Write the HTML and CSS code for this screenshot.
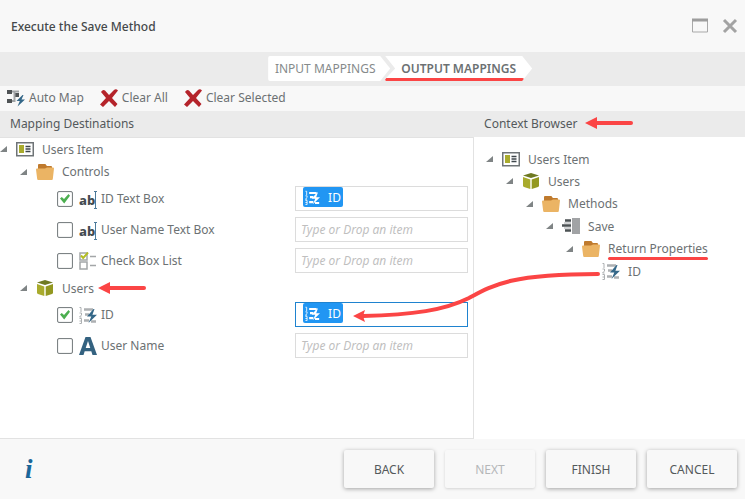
FILE: index.html
```
<!DOCTYPE html>
<html lang="en">
<head>
    <meta charset="UTF-8">
    <meta name="viewport" content="width=device-width, initial-scale=1.0">
    <title>Execute the Save Method</title>
    <link rel="stylesheet" href="styles.css">
</head>
<body>
    <!-- Shared icons -->
    <svg class="sprite" aria-hidden="true">
        <symbol id="i-toggle" viewBox="0 0 8 8"><path d="M7 1v6H0z" fill="#7f8485"/></symbol>
        <symbol id="i-item" viewBox="0 0 18 18">
            <rect x="0.75" y="2.75" width="16.5" height="13" fill="#fff" stroke="#6f7477" stroke-width="1.5"/>
            <rect x="3" y="5" width="5" height="8" fill="#a9ab2d"/>
            <path d="M9.500 6.500h5M9.500 9h5M9.500 11.500h5" stroke="#3e464b" stroke-width="1.3"/>
        </symbol>
        <symbol id="i-folder" viewBox="0 0 18 18">
            <path d="M2 7V2q0-1 1-1h6q1 0 1 1l1 1h4q1 0 1 1v3z" fill="#bf7a2d"/>
            <path d="M1 5.500h8l2-1h6q1 0 1 1l-1.200 10.500q0 1-1 1H2.200q-1 0-1-1L0 6.500q0-1 1-1z" fill="#ebb464"/>
        </symbol>
        <symbol id="i-cube" viewBox="0 0 18 18">
            <path d="M1 3.500L9 1l8 2.500L9 6z" fill="#6f7a22"/>
            <path d="M1 5l7.300 2.500V17L2 15q-1-.5-1-1.500z" fill="#a9ab2d"/>
            <path d="M17 5L9.700 7.500V17l6.300-2q1-.5 1-1.500z" fill="#939820"/>
        </symbol>
        <symbol id="i-list" viewBox="0 0 18 18">
            <path d="M1 1h7v7H1zM1 10h7v7H1z" fill="#fff" stroke="#a3a6a8" stroke-width="1.500"/>
            <path d="M2 3.500l2.200 2.500L9 .5" fill="none" stroke="#b4bd22" stroke-width="2"/>
            <path d="M11 4.500h6M11 13.500h6" stroke="#a3a6a8" stroke-width="1.500"/>
        </symbol>
        <symbol id="i-number" viewBox="0 0 18 18">
            <path d="M.5 1.500H2V6M.5 7h2v2l-2 2h2M.5 12.500h2v5h-2M.5 15h2" fill="none" stroke="var(--line, #adb0b2)"/>
            <path d="M5 3.500h9M6 8.500h4M5 14.500h5M12 15.500h5" stroke="var(--line, #adb0b2)" stroke-width="2.500"/>
            <path d="M14.500 3L8 10.500h4.300L9.500 17 18 8.800h-4.600l2.100-5.800z" fill="var(--bolt, #346788)"/>
        </symbol>
        <symbol id="i-letter" viewBox="0 0 18 18">
            <path d="M6.500 0h5L18 18h-4.500l-1.200-3.800H5.700L4.500 18H0zM9 4l-2.300 7h4.600z" fill="#346280"/>
        </symbol>
        <symbol id="i-method" viewBox="0 0 18 18">
            <path d="M3 3.500h6M0 8.500h9M3 13.500h6" stroke="#4c5254" stroke-width="2.500"/>
            <path d="M2 6h7M2 11h7" stroke="#a5a8aa"/>
            <path d="M10 1h8v16h-8z" fill="#a1a3a5"/>
        </symbol>
        <symbol id="i-cross" viewBox="0 0 18 18">
            <path d="M1 3q2-3 4-1.500L9 6l5-5q2-1.500 4 .5L12 9l5.500 6-2.500 3-6-6-6 6-3-2.500L6 9z" fill="#b5242b"/>
        </symbol>
        <symbol id="i-automap" viewBox="0 0 18 18">
            <path d="M0 1h5v4H0zM7 4h5v4H7zM0 10h5v4H0z" fill="#4f5355"/>
            <path d="M5 2.500h2.500V12H5M8 2.500h4" fill="none" stroke="#a1a4a6" stroke-width="2"/>
            <path d="M15.500 6L9.500 12h3.300l-2.300 5.500L18 10.500h-3.500l2-4.500z" fill="#346788"/>
        </symbol>
        <symbol id="i-arrow" viewBox="0 0 48 12">
            <path d="M0 6L12 0v12z" fill="#fb4545"/>
            <path d="M10 6h36" stroke="#fb4545" stroke-width="4" stroke-linecap="round"/>
        </symbol>
    </svg>

    <div class="dialog">
        <header class="titlebar">
            <h1>Execute the Save Method</h1>
            <button class="window-btn" aria-label="Maximize">
                <svg width="18" height="18"><path d="M1.500 2v13h15V2" fill="none" stroke="#a9a9a9"/><path d="M1 3h16" stroke="#9d9d9d" stroke-width="3"/></svg>
            </button>
            <button class="window-btn" aria-label="Close">
                <svg width="18" height="18"><path d="M3 3l12 12M15 3L3 15" stroke="#a3a3a3" stroke-width="3"/></svg>
            </button>
        </header>

        <nav class="steps">
            <button class="step step-first">INPUT MAPPINGS</button>
            <button class="step step-active">OUTPUT MAPPINGS</button>
        </nav>

        <div class="toolbar">
            <button class="tool"><svg class="icon"><use href="#i-automap"/></svg>Auto Map</button>
            <button class="tool"><svg class="icon"><use href="#i-cross"/></svg>Clear All</button>
            <button class="tool"><svg class="icon"><use href="#i-cross"/></svg>Clear Selected</button>
        </div>

        <main class="panels">
            <section class="panel destinations">
                <h2>Mapping Destinations</h2>
                <ul class="tree">
                    <li>
                        <div class="row"><svg class="toggle"><use href="#i-toggle"/></svg><svg class="icon"><use href="#i-item"/></svg>Users Item</div>
                        <ul>
                            <li>
                                <div class="row folder"><svg class="toggle"><use href="#i-toggle"/></svg><svg class="icon"><use href="#i-folder"/></svg>Controls</div>
                                <ul class="mappings">
                                    <li class="mapping">
                                        <input type="checkbox" id="c1" checked>
                                        <span class="icon text-icon">ab</span>
                                        <label for="c1">ID Text Box</label>
                                        <div class="field"><span class="chip"><svg class="icon"><use href="#i-number"/></svg>ID</span><input type="text" aria-label="ID Text Box mapping"></div>
                                    </li>
                                    <li class="mapping">
                                        <input type="checkbox" id="c2">
                                        <span class="icon text-icon">ab</span>
                                        <label for="c2">User Name Text Box</label>
                                        <div class="field"><input type="text" placeholder="Type or Drop an item" aria-label="User Name Text Box mapping"></div>
                                    </li>
                                    <li class="mapping">
                                        <input type="checkbox" id="c3">
                                        <svg class="icon"><use href="#i-list"/></svg>
                                        <label for="c3">Check Box List</label>
                                        <div class="field"><input type="text" placeholder="Type or Drop an item" aria-label="Check Box List mapping"></div>
                                    </li>
                                </ul>
                            </li>
                            <li>
                                <div class="row"><svg class="toggle"><use href="#i-toggle"/></svg><svg class="icon"><use href="#i-cube"/></svg>Users<svg class="arrow"><use href="#i-arrow"/></svg></div>
                                <ul class="mappings">
                                    <li class="mapping">
                                        <input type="checkbox" id="c4" checked>
                                        <svg class="icon"><use href="#i-number"/></svg>
                                        <label for="c4">ID</label>
                                        <div class="field field-active"><span class="chip"><svg class="icon"><use href="#i-number"/></svg>ID</span><input type="text" aria-label="ID mapping"></div>
                                    </li>
                                    <li class="mapping">
                                        <input type="checkbox" id="c5">
                                        <svg class="icon"><use href="#i-letter"/></svg>
                                        <label for="c5">User Name</label>
                                        <div class="field"><input type="text" placeholder="Type or Drop an item" aria-label="User Name mapping"></div>
                                    </li>
                                </ul>
                            </li>
                        </ul>
                    </li>
                </ul>
            </section>

            <section class="panel context">
                <h2>Context Browser<svg class="arrow"><use href="#i-arrow"/></svg></h2>
                <ul class="tree">
                    <li>
                        <div class="row"><svg class="toggle"><use href="#i-toggle"/></svg><svg class="icon"><use href="#i-item"/></svg>Users Item</div>
                        <ul><li>
                            <div class="row"><svg class="toggle"><use href="#i-toggle"/></svg><svg class="icon"><use href="#i-cube"/></svg>Users</div>
                            <ul><li>
                                <div class="row folder"><svg class="toggle"><use href="#i-toggle"/></svg><svg class="icon"><use href="#i-folder"/></svg>Methods</div>
                                <ul><li>
                                    <div class="row"><svg class="toggle"><use href="#i-toggle"/></svg><svg class="icon"><use href="#i-method"/></svg>Save</div>
                                    <ul><li>
                                        <div class="row folder"><svg class="toggle"><use href="#i-toggle"/></svg><svg class="icon"><use href="#i-folder"/></svg><span class="marked">Return Properties</span></div>
                                        <ul><li>
                                            <div class="row leaf">
                                                <svg class="icon"><use href="#i-number"/></svg>ID
                                                <!-- Connector from the property to its destination field -->
                                                <svg class="connector" width="248" height="56" viewBox="0 0 248 56">
                                                    <path d="M10 44C60 43 92 38 116 26C140 13 158 2 245 2" fill="none" stroke="#fb4545" stroke-width="4" stroke-linecap="round"/>
                                                    <path d="M0 44l12-6-2 6 2 6z" fill="#fb4545"/>
                                                </svg>
                                            </div>
                                        </li></ul>
                                    </li></ul>
                                </li></ul>
                            </li></ul>
                        </li></ul>
                    </li>
                </ul>
            </section>
        </main>

        <footer class="actions">
            <button class="info" aria-label="Information">i</button>
            <button class="btn">BACK</button>
            <button class="btn" disabled>NEXT</button>
            <button class="btn">FINISH</button>
            <button class="btn">CANCEL</button>
        </footer>
    </div>
</body>
</html>
```
FILE: styles.css
```
* {
    box-sizing: border-box;
}

body {
    margin: 0;
    font-family: "Noto Sans", "Open Sans", sans-serif;
    font-size: 12px;
    color: #6c7173;
    background-color: #f8f8f8;
}

button,
input {
    font: inherit;
    color: inherit;
}

button {
    padding: 0;
    border: none;
    background: none;
    cursor: pointer;
}

ul {
    margin: 0;
    padding: 0;
    list-style: none;
}

.sprite {
    display: none;
}

.icon {
    width: 18px;
    height: 18px;
    flex: none;
}

.dialog {
    display: flex;
    flex-direction: column;
    min-height: 100vh;
}

/* Title bar */
.titlebar {
    display: flex;
    align-items: center;
    gap: 12px;
    height: 52px;
    padding: 0 6px 0 11px;
}

.titlebar h1 {
    flex: 1;
    margin: 0;
    font-size: 12px;
    font-weight: 500;
    color: #45494b;
}

.window-btn {
    width: 18px;
    height: 18px;
}

/* Wizard steps */
.steps {
    display: flex;
    height: 34px;
    padding: 4px 0 5px 36%;
    background-color: #ebebeb;
}

.step {
    background-color: #fff;
    color: #868a8b;
}

.step-first {
    width: 122px;
    padding-right: 8px;
    border-radius: 2px 0 0 2px;
    clip-path: polygon(0 0, calc(100% - 10px) 0, 100% 50%, calc(100% - 10px) 100%, 0 100%);
}

.step-active {
    position: relative;
    width: 147px;
    margin-left: -5px;
    padding: 0;
    font-weight: 600;
    color: #6c7173;
    clip-path: polygon(0 0, calc(100% - 10px) 0, 100% 50%, calc(100% - 10px) 100%, 0 100%, 0 92%, 10px 50%);
}

/* Toolbar */
.toolbar {
    display: flex;
    align-items: center;
    gap: 16px;
    height: 25px;
    padding: 0 0 2px 7px;
}

.tool {
    display: flex;
    align-items: center;
    gap: 4px;
}

/* Panels */
.panels {
    flex: 1;
    display: grid;
    grid-template-columns: 7fr 4fr;
}

.panel {
    display: flex;
    flex-direction: column;
}

.panel h2 {
    display: flex;
    align-items: center;
    gap: 8px;
    height: 26px;
    margin: 0;
    padding: 0 0 2px 10px;
    font-size: 12px;
    font-weight: 400;
    color: #54595b;
    background-color: #ebebeb;
}

.tree {
    flex: 1;
    background-color: #fff;
}

.tree ul {
    padding-left: 20px;
}

.destinations .tree {
    border: solid #e2e2e2;
    border-width: 1px 1px 1px 0;
}

.context .tree {
    padding: 11px 0 0 12px;
}

.row {
    display: flex;
    align-items: center;
    height: 22px;
}

.row.folder {
    height: 23px;
}

.row > .icon {
    margin-right: 8px;
}

.toggle {
    width: 8px;
    height: 8px;
    margin-right: 8px;
}

.arrow {
    width: 48px;
    height: 12px;
    margin-left: 4px;
}

h2 .arrow {
    margin-left: 0;
}

.tree .mappings {
    padding: 0 5px 1px 37px;
}

.mapping {
    display: flex;
    align-items: center;
    height: 31px;
}

.mapping label {
    flex: 1;
    margin-left: 4px;
}

.mapping input[type="checkbox"] {
    appearance: none;
    width: 16px;
    height: 16px;
    margin: 0 6px 0 0;
    border: 1px solid #7d8385;
    border-radius: 2px;
    background-color: #fff;
    box-shadow: inset 0 0 1px #7d8385;
}

.mapping input[type="checkbox"]:checked::after {
    content: "";
    display: block;
    width: 10px;
    height: 10px;
    margin: 2px;
    background-color: #4caf50;
    clip-path: polygon(0 50%, 18% 34%, 40% 56%, 85% 5%, 100% 22%, 42% 100%);
}

.text-icon {
    position: relative;
    font-size: 13px;
    font-weight: 800;
    line-height: 20px;
    color: #434b50;
}

/* Text cursor beside the letters */
.text-icon::after {
    content: "";
    position: absolute;
    top: 1px;
    right: 0;
    width: 3px;
    height: 16px;
    border: solid #4d7b9b;
    border-width: 1px 0;
    background: linear-gradient(#4d7b9b, #4d7b9b) 1px 0 / 1px 100% no-repeat;
}

.field {
    display: flex;
    width: 173px;
    height: 25px;
    border: 1px solid #dcdcdc;
    background-color: #fff;
}

.field-active {
    border-color: #1f83cf;
}

.field input {
    flex: 1;
    min-width: 0;
    padding: 0 5px;
    border: none;
    outline: none;
    background: none;
}

.field input::placeholder {
    font-style: italic;
    color: #bfbfbf;
}

.chip {
    --line: #fff;
    --bolt: #fff;
    display: flex;
    align-items: center;
    gap: 8px;
    width: 40px;
    height: 20px;
    margin-left: 7px;
    padding-left: 2px;
    border-radius: 2px;
    color: #fff;
    background-color: #2196f3;
}

.chip .icon {
    width: 15px;
    height: 15px;
}

/* Annotations */
.marked,
.leaf {
    position: relative;
}

.leaf {
    padding-left: 16px;
}

.marked::after,
.step-active::after {
    content: "";
    position: absolute;
    right: 0;
    bottom: -3px;
    left: 0;
    height: 3px;
    border-radius: 2px;
    background-color: #fb4545;
}

.step-active::after {
    right: 8px;
    bottom: 0;
}

.connector {
    position: absolute;
    top: 12px;
    right: calc(100% - 15px);
}

/* Footer */
.actions {
    display: flex;
    align-items: center;
    gap: 11px;
    height: 60px;
    padding: 0 8px 0 25px;
}

.info {
    margin-right: auto;
    font-family: "Liberation Serif", serif;
    font-size: 27px;
    font-style: italic;
    font-weight: 700;
    color: #1b6699;
}

.btn {
    width: 90px;
    height: 38px;
    border-radius: 2px;
    color: #54595b;
    background-color: #f8f8f8;
    box-shadow: 0 1px 4px rgba(0, 0, 0, 0.35);
}

.btn:disabled {
    color: #b5b7b8;
    box-shadow: 0 1px 3px rgba(0, 0, 0, 0.15);
    cursor: default;
}
```
